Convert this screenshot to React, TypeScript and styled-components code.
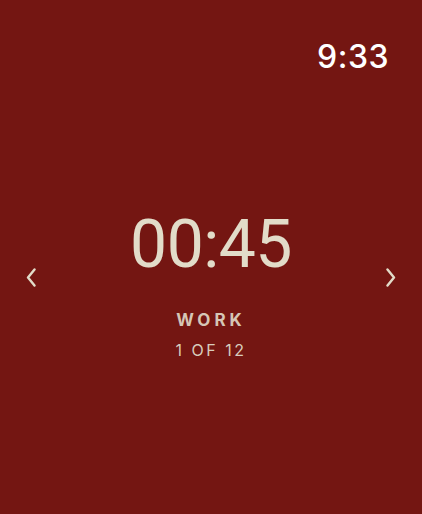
import React from "react";
import styled, { createGlobalStyle } from "styled-components";

const GlobalStyle = createGlobalStyle`
  html, body {
    margin: 0;
    padding: 0;
    background: #741612;
  }
  body {
    font-family: Inter, "Noto Sans", sans-serif;
  }
`;

const Screen = styled.div`
  width: 422px;
  height: 514px;
  background: #741612;
  display: flex;
  flex-direction: column;
  overflow: hidden;
`;

const StatusBar = styled.div`
  display: flex;
  justify-content: flex-end;
  padding: 37px 33px 0 0;
  height: 40px;
`;

const Clock = styled.div`
  color: #ffffff;
  font-size: 32px;
  font-weight: 500;
  letter-spacing: 0.5px;
  line-height: 40px;
`;

const Body = styled.div`
  display: flex;
  align-items: flex-start;
  justify-content: space-between;
  padding: 0 24px;
  margin-top: 135px;
`;

const NavButton = styled.button`
  border: none;
  background: none;
  padding: 0;
  width: 14px;
  height: 20px;
  margin-top: 55px;
  display: flex;
  align-items: center;
  justify-content: center;
  cursor: pointer;
`;

const Center = styled.div`
  display: flex;
  flex-direction: column;
  align-items: center;
`;

const Timer = styled.div`
  color: #e2dcc9;
  font-family: Roboto, "Noto Sans", sans-serif;
  font-size: 66px;
  font-weight: 400;
  letter-spacing: -0.5px;
  line-height: 66px;
`;

const Phase = styled.div<{ $dim?: boolean }>`
  color: ${(p) => (p.$dim ? "#d8ccbd" : "#d6c6b6")};
  font-size: ${(p) => (p.$dim ? "16px" : "17px")};
  font-weight: ${(p) => (p.$dim ? 400 : 700)};
  letter-spacing: ${(p) => (p.$dim ? "2.5px" : "4px")};
  margin-top: ${(p) => (p.$dim ? "12px" : "33px")};
  line-height: 18px;
`;

const Chevron = ({ dir }: { dir: "left" | "right" }) => (
  <svg width="12" height="20" viewBox="0 0 12 20">
    <polyline
      points={dir === "left" ? "9.5,2.5 3,10.5 9.5,18.5" : "2.5,2.5 9,10.5 2.5,18.5"}
      fill="none"
      stroke="#e2dcc9"
      strokeWidth="2.4"
      strokeLinecap="round"
      strokeLinejoin="round"
    />
  </svg>
);

export default function App() {
  return (
    <>
      <GlobalStyle />
      <Screen>
        <StatusBar>
          <Clock>9:33</Clock>
        </StatusBar>
        <Body>
          <NavButton aria-label="Previous">
            <Chevron dir="left" />
          </NavButton>
          <Center>
            <Timer>00:45</Timer>
            <Phase>WORK</Phase>
            <Phase $dim>1 OF 12</Phase>
          </Center>
          <NavButton aria-label="Next">
            <Chevron dir="right" />
          </NavButton>
        </Body>
      </Screen>
    </>
  );
}
